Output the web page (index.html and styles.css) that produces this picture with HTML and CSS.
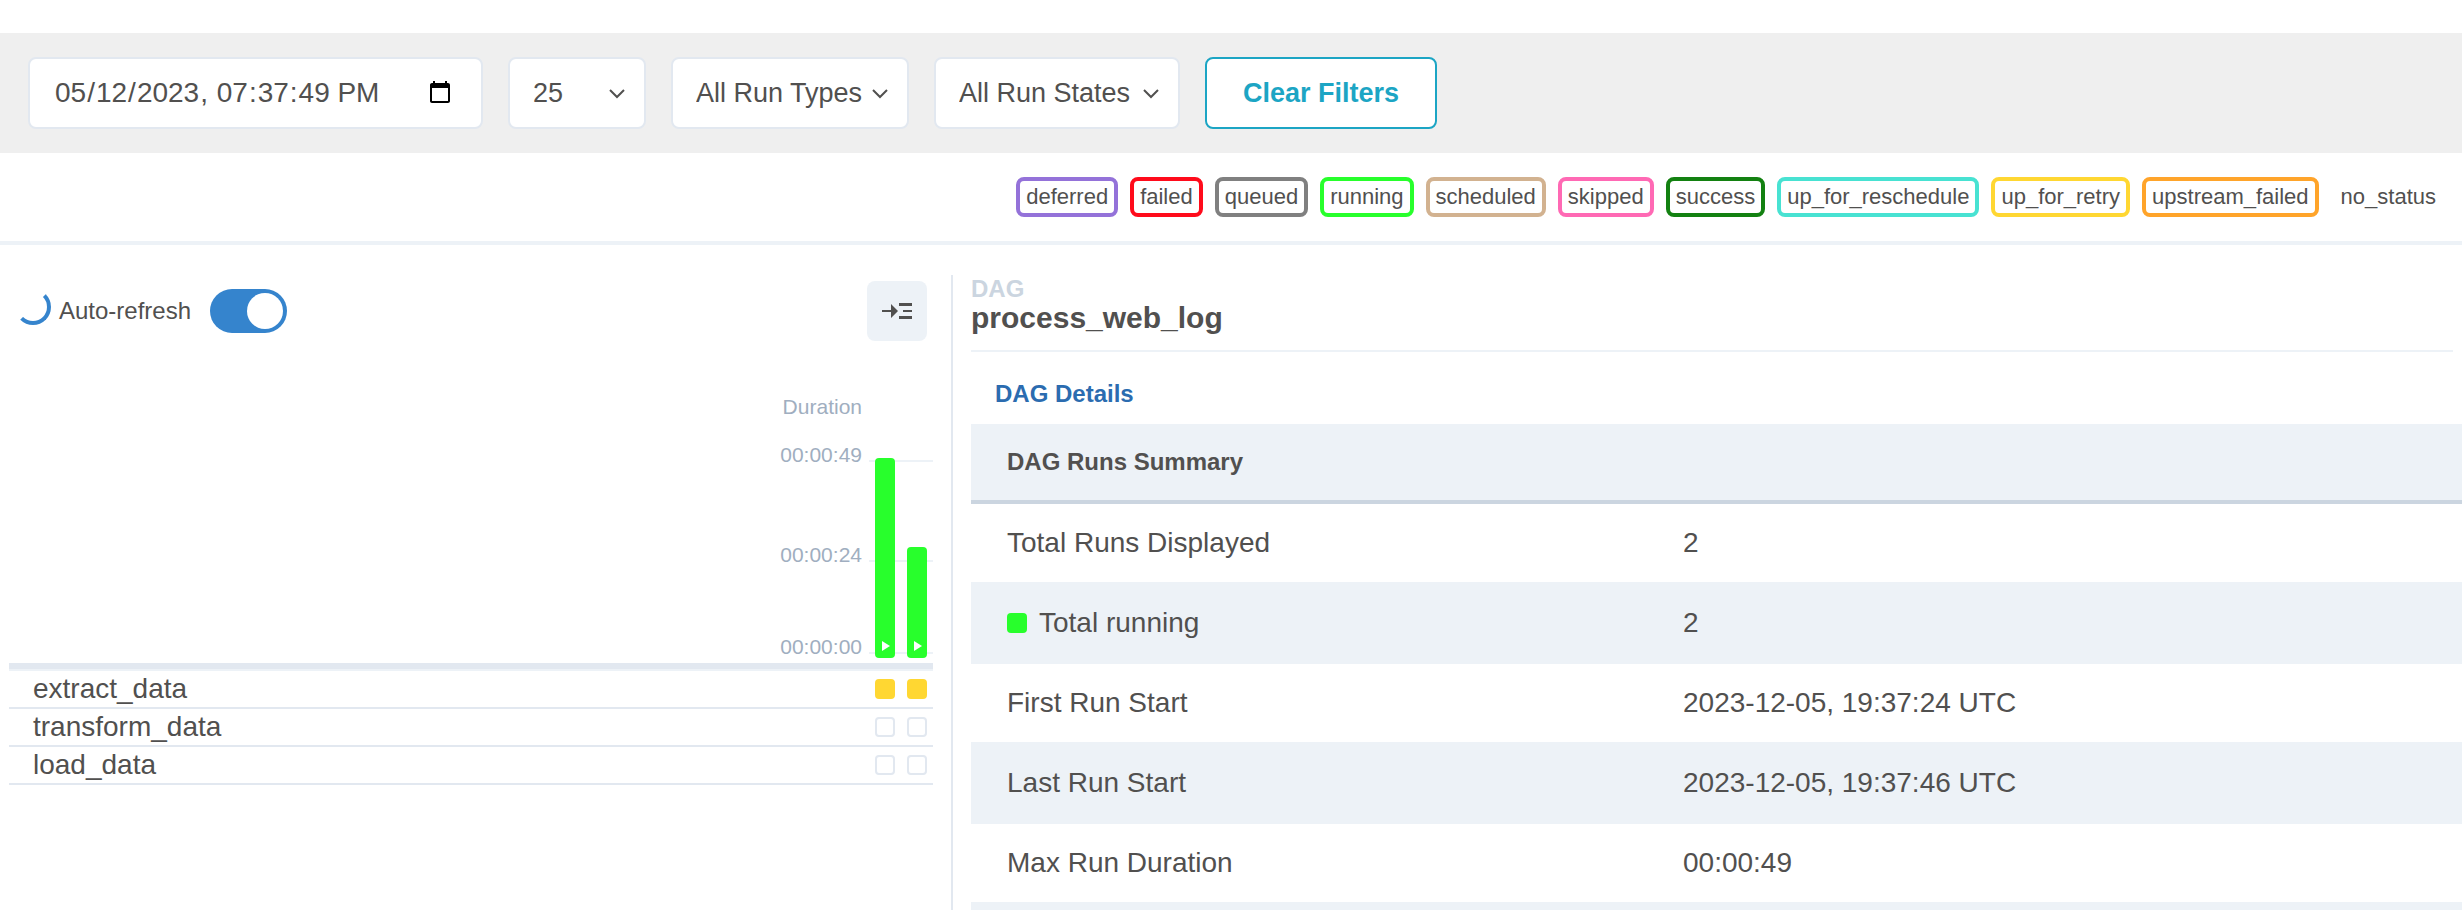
FILE: index.html
```html
<!DOCTYPE html>
<html lang="en">
<head>
<meta charset="utf-8">
<title>process_web_log - Grid</title>
<link rel="stylesheet" href="styles.css">
</head>
<body>
<form class="filters">
  <input class="control date" type="datetime-local" step="1" value="2023-05-12T19:37:49" aria-label="Base date">
  <div class="picker picker-count">
    <select class="control" aria-label="Number of runs"><option>25</option></select>
    <svg class="chevron" viewBox="0 0 16 10"><path d="M1 1l7 7 7-7"/></svg>
  </div>
  <div class="picker picker-types">
    <select class="control" aria-label="Run types"><option>All Run Types</option></select>
    <svg class="chevron" viewBox="0 0 16 10"><path d="M1 1l7 7 7-7"/></svg>
  </div>
  <div class="picker picker-states">
    <select class="control" aria-label="Run states"><option>All Run States</option></select>
    <svg class="chevron" viewBox="0 0 16 10"><path d="M1 1l7 7 7-7"/></svg>
  </div>
  <button class="control clear" type="button">Clear Filters</button>
</form>
<div class="legend">
  <span class="badge deferred">deferred</span>
  <span class="badge failed">failed</span>
  <span class="badge queued">queued</span>
  <span class="badge running">running</span>
  <span class="badge scheduled">scheduled</span>
  <span class="badge skipped">skipped</span>
  <span class="badge success">success</span>
  <span class="badge reschedule">up_for_reschedule</span>
  <span class="badge retry">up_for_retry</span>
  <span class="badge upstream">upstream_failed</span>
  <span class="badge">no_status</span>
</div>
<main class="main">
  <section class="grid-panel">
    <div class="toolbar">
      <span class="spinner"></span>
      <label class="refresh">Auto-refresh <input class="switch" type="checkbox" role="switch" checked></label>
      <button class="toggle" type="button" aria-label="Hide details">
        <svg viewBox="0 0 30 16"><path d="M0 7h9V1l7 7-7 7V9H0zM17 0h13v3H17zM21 7h9v2h-9zM17 13h13v3H17z"/></svg>
      </button>
    </div>
    <div class="chart">
      <div class="axis">
        <span>Duration</span>
        <span class="tick tick-max">00:00:49</span>
        <span class="tick tick-mid">00:00:24</span>
        <span class="tick tick-min">00:00:00</span>
      </div>
      <div class="plot">
        <div class="line"></div>
        <div class="line line-mid"></div>
        <div class="line line-min"></div>
        <div class="bars">
          <div class="bar" style="height:100%"><svg viewBox="0 0 8 10"><path d="M0 0l8 5-8 5z"/></svg></div>
          <div class="bar" style="height:55.5%"><svg viewBox="0 0 8 10"><path d="M0 0l8 5-8 5z"/></svg></div>
        </div>
      </div>
    </div>
    <div class="tasks">
      <div class="task"><span>extract_data</span><i class="box retry-box"></i><i class="box retry-box"></i></div>
      <div class="task"><span>transform_data</span><i class="box"></i><i class="box"></i></div>
      <div class="task"><span>load_data</span><i class="box"></i><i class="box"></i></div>
    </div>
  </section>
  <section class="details">
    <header class="heading">
      <div class="kind">DAG</div>
      <h1 class="name">process_web_log</h1>
    </header>
    <h2 class="tab">DAG Details</h2>
    <table class="summary">
      <thead><tr><th class="key">DAG Runs Summary</th><th></th></tr></thead>
      <tbody>
        <tr><td>Total Runs Displayed</td><td>2</td></tr>
        <tr><td><span class="state"><i class="dot"></i>Total running</span></td><td>2</td></tr>
        <tr><td>First Run Start</td><td>2023-12-05, 19:37:24 UTC</td></tr>
        <tr><td>Last Run Start</td><td>2023-12-05, 19:37:46 UTC</td></tr>
        <tr><td>Max Run Duration</td><td>00:00:49</td></tr>
        <tr><td></td><td></td></tr>
      </tbody>
    </table>
  </section>
</main>
</body>
</html>
```
FILE: styles.css
```css
* { box-sizing: border-box; }
body {
  margin: 0;
  height: 100vh;
  overflow: hidden;
  display: flex;
  flex-direction: column;
  background: #fff;
  color: #51504f;
  font-family: "Liberation Sans", Arial, sans-serif;
  font-size: 28px;
}

/* Filters */
.filters {
  display: flex;
  flex: none;
  gap: 25px;
  margin-top: 33px;
  padding: 24px 28px;
  background: #efefef;
}
.control {
  height: 72px;
  margin: 0;
  border: 2px solid #e2e8f0;
  border-radius: 8px;
  background: #fff;
  color: inherit;
  font: inherit;
  font-size: 27px;
}
.date { width: 455px; padding: 0 28px 0 24px; font-size: 28px; }
.date::-webkit-calendar-picker-indicator { width: 26px; height: 26px; padding: 0; }
.picker { position: relative; }
.picker .control { width: 100%; padding: 0 23px; appearance: none; }
.picker-count { width: 138px; }
.picker-types { width: 238px; }
.picker-states { width: 246px; }
.chevron {
  position: absolute;
  right: 21px;
  top: 32px;
  width: 16px;
  height: 10px;
  fill: none;
  stroke: #51504f;
  stroke-width: 2;
  pointer-events: none;
}
.clear {
  width: 232px;
  border-color: #1ca5c4;
  color: #1ca5c4;
  font-weight: bold;
}

/* Legend */
.legend {
  display: flex;
  flex: none;
  justify-content: flex-end;
  gap: 12px;
  padding: 24px 16px;
  border-bottom: 4px solid #edf2f7;
}
.badge {
  padding: 0 6px;
  border: 4px solid transparent;
  border-radius: 8px;
  font-size: 22px;
  line-height: 32px;
}
.deferred { border-color: #9472d9; }
.failed { border-color: #ff0b1b; }
.queued { border-color: #808080; }
.running { border-color: #28ff2c; }
.scheduled { border-color: #d2b290; }
.skipped { border-color: #ff69b4; }
.success { border-color: #138111; }
.reschedule { border-color: #48e2d2; }
.retry { border-color: #ffd732; }
.upstream { border-color: #ffa42a; }

.main {
  display: grid;
  grid-template-columns: 951fr 1511fr;
  flex: 1;
  min-height: 0;
  padding-top: 30px;
}

/* Grid panel */
.grid-panel { padding: 6px 18px 0 9px; }
.toolbar { display: flex; align-items: center; padding: 0 6px; }
.spinner {
  width: 36px;
  height: 36px;
  margin-bottom: 8px;
  border: 4px solid transparent;
  border-right-color: #3584cd;
  border-bottom-color: #3584cd;
  border-radius: 50%;
}
.refresh {
  display: flex;
  align-items: center;
  gap: 19px;
  margin-left: 8px;
  font-size: 24px;
}
.switch {
  appearance: none;
  width: 77px;
  height: 44px;
  margin: 0;
  padding: 4px;
  border-radius: 22px;
  background: #3584cd;
}
.switch::before {
  content: "";
  display: block;
  width: 36px;
  height: 36px;
  margin-left: auto;
  border-radius: 50%;
  background: #fff;
}
.toggle {
  display: flex;
  align-items: center;
  justify-content: center;
  width: 60px;
  height: 60px;
  margin-left: auto;
  padding: 0;
  border: 0;
  border-radius: 8px;
  background: #edf2f7;
}
.toggle svg { width: 30px; height: 16px; fill: #51504f; }

.chart {
  display: flex;
  justify-content: flex-end;
  gap: 7px;
  margin-top: 54px;
  padding-bottom: 4px;
  border-bottom: 6px solid #e2e8f0;
}
.axis {
  display: flex;
  flex-direction: column;
  align-items: flex-end;
  color: #a0aec0;
  font-size: 21px;
  line-height: 24px;
}
.tick-max { margin-top: 24px; }
.tick-mid { margin-top: 76px; }
.tick-min { margin-top: 68px; }
.plot {
  position: relative;
  width: 64px;
  height: 200px;
  margin-top: 63px;
  padding: 0 6px;
}
.line {
  position: absolute;
  left: 0;
  right: 0;
  top: 2px;
  height: 2px;
  background: #edf2f7;
}
.line-mid { top: 102px; }
.line-min { top: 194px; }
.bars {
  position: relative;
  display: flex;
  align-items: flex-end;
  justify-content: space-between;
  height: 100%;
}
.bar {
  display: flex;
  align-items: flex-end;
  justify-content: center;
  width: 20px;
  padding: 0 0 7px 1px;
  border-radius: 4px;
  background: #28ff2c;
}
.bar svg { width: 8px; height: 10px; fill: #fff; }

.tasks { border-top: 2px solid #edf2f7; }
.task {
  display: flex;
  align-items: center;
  gap: 12px;
  height: 38px;
  padding: 0 6px 0 24px;
  border-bottom: 2px solid #e2e8f0;
}
.task span { flex: 1; line-height: 32px; }
.box {
  width: 20px;
  height: 20px;
  border: 2px solid #e2e8f0;
  border-radius: 4px;
}
.retry-box { border-color: #ffd732; background: #ffd732; }

/* Details */
.details { overflow: hidden; padding-left: 18px; border-left: 2px solid #e2e8f0; }
.heading { margin-right: 9px; padding-bottom: 17px; border-bottom: 2px solid #edf2f7; }
.kind {
  color: #cbd5e0;
  font-size: 24px;
  font-weight: bold;
  line-height: 28px;
}
.name { margin: 0; font-size: 30px; line-height: 30px; }
.tab {
  margin: 0;
  padding: 30px 24px 18px;
  color: #2b6cb0;
  font-size: 24px;
  line-height: 24px;
}
.summary { width: 100%; border-collapse: separate; border-spacing: 0; table-layout: fixed; }
.summary th {
  height: 80px;
  padding: 0 36px;
  border-bottom: 4px solid #cbd5e0;
  background: #edf2f7;
  font-size: 24px;
  text-align: left;
}
.summary .key { width: 45.34%; }
.summary td { height: 80px; padding: 0 36px; border-bottom: 2px solid #edf2f7; }
.summary tbody tr:nth-child(even) { background: #edf2f7; }
.state { display: flex; align-items: center; gap: 12px; }
.dot { width: 20px; height: 20px; border-radius: 4px; background: #28ff2c; }
```
